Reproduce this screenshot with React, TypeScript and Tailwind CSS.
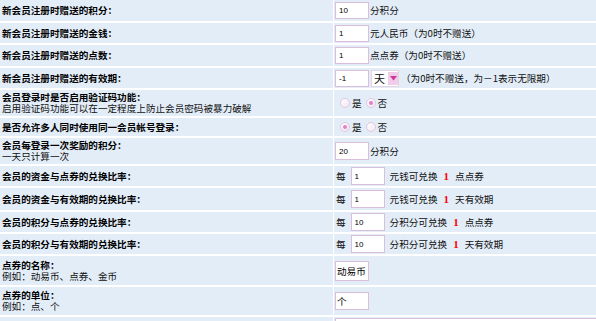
import React from 'react';

type Row = { title: string; desc?: string; h: string; right: React.ReactNode };

const Box: React.FC<{ value: string; w?: string; h?: string; big?: boolean }> = ({ value, w = 'w-[34px]', h = 'h-[17px]', big }) => (
  <input
    readOnly
    value={value}
    className={`${w} ${h} shrink-0 border border-[#d9bfdc] bg-white text-black outline-none ${
      big ? "px-[1px] text-[9.6px] font-['Noto_Sans_CJK_SC']" : "px-[3px] text-[8px] font-['Liberation_Sans']"
    }`}
  />
);

const Radio: React.FC<{ checked?: boolean }> = ({ checked }) => (
  <span className="flex h-[10px] w-[10px] shrink-0 items-center justify-center rounded-full border border-[#e2c6e2] bg-gradient-to-br from-white to-[#f1e6f1]">
    {checked && <span className="h-[4px] w-[4px] rounded-full bg-[#e27fc6]" />}
  </span>
);

const YesNo: React.FC<{ yes?: boolean }> = ({ yes }) => (
  <div className="flex items-center pl-[5px]">
    <Radio checked={yes} />
    <span className="ml-[2px] mr-[4px]">是</span>
    <Radio checked={!yes} />
    <span className="ml-[2px]">否</span>
  </div>
);

const Rate: React.FC<{ value: string; unit: string; tail: string }> = ({ value, unit, tail }) => (
  <div className="flex items-center pl-[1px]">
    <span>每</span>
    <span className="ml-[5px]">
      <Box value={value} h="h-[18px]" />
    </span>
    <span className="ml-[5px]">{unit}</span>
    <span className="ml-[6px] font-['Liberation_Serif'] text-[11px] font-bold text-[#f00]">1</span>
    <span className="ml-[6px]">{tail}</span>
  </div>
);

const rows: Row[] = [
  { title: '新会员注册时赠送的积分：', h: 'h-[21px]', right: <><Box value="10" /><span className="ml-[1px]">分积分</span></> },
  { title: '新会员注册时赠送的金钱：', h: 'h-[20px]', right: <><Box value="1" /><span className="ml-[1px]">元人民币（为0时不赠送）</span></> },
  { title: '新会员注册时赠送的点数：', h: 'h-[21px]', right: <><Box value="1" /><span className="ml-[1px]">点点券（为0时不赠送）</span></> },
  {
    title: '新会员注册时赠送的有效期：',
    h: 'h-[20px]',
    right: (
      <>
        <Box value="-1" />
        <div className="ml-[2px] flex h-[17px] w-[28px] items-center justify-between border border-[#e3d3e3] bg-white pl-[2px]">
          <span className="text-[11px] leading-none">天</span>
          <span className="flex h-[13px] w-[10px] items-center justify-center bg-[#f2cdea]">
            <svg width="7" height="5" viewBox="0 0 7 5"><path d="M0 0h7L3.5 4.5z" fill="#c8379c" /></svg>
          </span>
        </div>
        <span className="ml-[2px]">（为0时不赠送，为－1表示无限期）</span>
      </>
    ),
  },
  { title: '会员登录时是否启用验证码功能：', desc: '启用验证码功能可以在一定程度上防止会员密码被暴力破解', h: 'h-[26px]', right: <YesNo /> },
  { title: '是否允许多人同时使用同一会员帐号登录：', h: 'h-[18px]', right: <YesNo yes /> },
  { title: '会员每登录一次奖励的积分：', desc: '一天只计算一次', h: 'h-[26px]', right: <><Box value="20" h="h-[18px]" /><span className="ml-[1px]">分积分</span></> },
  { title: '会员的资金与点券的兑换比率：', h: 'h-[20px]', right: <Rate value="1" unit="元钱可兑换" tail="点点券" /> },
  { title: '会员的资金与有效期的兑换比率：', h: 'h-[22px]', right: <Rate value="1" unit="元钱可兑换" tail="天有效期" /> },
  { title: '会员的积分与点券的兑换比率：', h: 'h-[20px]', right: <Rate value="10" unit="分积分可兑换" tail="点点券" /> },
  { title: '会员的积分与有效期的兑换比率：', h: 'h-[20px]', right: <Rate value="10" unit="分积分可兑换" tail="天有效期" /> },
  { title: '点券的名称：', desc: '例如：动易币、点券、金币', h: 'h-[29px]', right: <Box value="动易币" h="h-[20px]" big /> },
  { title: '点券的单位：', desc: '例如：点、个', h: 'h-[28px]', right: <Box value="个" h="h-[18px]" big /> },
];

export default function App() {
  return (
    <div className="h-[321px] w-[596px] overflow-hidden bg-white font-['Noto_Sans_CJK_SC',sans-serif] text-[9.6px] leading-[11px] text-[#111]">
      <div className="grid grid-cols-[333px_1fr] gap-x-px gap-y-[2px]">
        {rows.map((r) => (
          <React.Fragment key={r.title}>
            <div className={`${r.h} flex flex-col justify-center bg-[#e3edf8] pl-[2px]`}>
              <div className="text-[9.6px] font-bold text-black">{r.title}</div>
              {r.desc && <div>{r.desc}</div>}
            </div>
            <div className={`${r.h} flex items-center bg-[#e3edf8] pl-[1px]`}>{r.right}</div>
          </React.Fragment>
        ))}
        <div className="h-[60px] bg-[#e3edf8]" />
        <div className="h-[60px] bg-[#e3edf8] pl-[1px] pt-px">
          <div className="h-[50px] w-[400px] border border-[#d9bfdc] bg-white" />
        </div>
      </div>
    </div>
  );
}
